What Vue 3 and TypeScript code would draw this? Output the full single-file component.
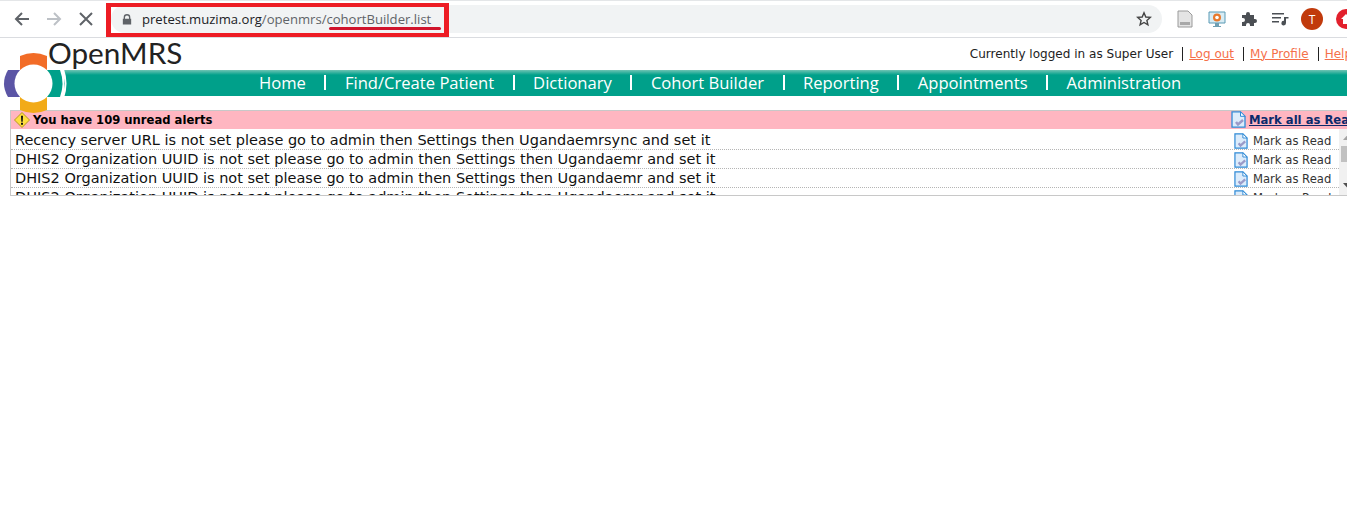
<script setup lang="ts">
const nav: string[] = ['Home', 'Find/Create Patient', 'Dictionary', 'Cohort Builder', 'Reporting', 'Appointments', 'Administration']
const alerts: string[] = [
  'Recency server URL is not set please go to admin then Settings then Ugandaemrsync and set it',
  'DHIS2 Organization UUID is not set please go to admin then Settings then Ugandaemr and set it',
  'DHIS2 Organization UUID is not set please go to admin then Settings then Ugandaemr and set it',
  'DHIS2 Organization UUID is not set please go to admin then Settings then Ugandaemr and set it',
]
</script>

<template>
  <div class="page">
    <header class="toolbar">
      <svg class="tool back" width="18" height="18" viewBox="0 0 18 18"><path d="M16 9H3.5M9 3 3 9l6 6" fill="none" stroke="#5f6368" stroke-width="2"/></svg>
      <svg class="tool fwd" width="18" height="18" viewBox="0 0 18 18"><path d="M2 9h12.500M9 3l6 6-6 6" fill="none" stroke="#bdc1c6" stroke-width="2"/></svg>
      <svg class="tool stop" width="18" height="18" viewBox="0 0 18 18"><path d="M3 3l12 12M15 3 3 15" fill="none" stroke="#5f6368" stroke-width="2"/></svg>
      <div class="omnibox">
        <svg class="lock" width="10" height="13" viewBox="0 0 12 14"><path d="M2 6V4.500a4 4 0 0 1 8 0V6h1v7H1V6zm1.600 0h4.800V4.500a2.400 2.400 0 0 0-4.800 0z" fill="#5f6368"/></svg>
        <span class="url"><b>pretest.muzima.org</b>/openmrs/cohortBuilder.list</span>
        <svg class="star" width="16" height="16" viewBox="0 0 16 16"><path d="M8 1.800 9.800 6l4.500.4-3.400 3 1 4.400L8 11.500l-3.900 2.300 1-4.400-3.400-3L6.200 6z" fill="none" stroke="#444" stroke-width="1.400"/></svg>
      </div>
      <div class="exts">
        <svg width="16" height="18" viewBox="0 0 16 18"><path d="M1 1h10l4 4v12H1z" fill="#e4e4e4" stroke="#9a9a9a"/><path d="M3 12h10v3H3z" fill="#a8a8a8"/></svg>
        <svg width="18" height="18" viewBox="0 0 18 18"><path d="M1 2h16v11H1z" fill="#d8ecf4" stroke="#5b9ab5"/><circle cx="9" cy="7.500" r="4" fill="#e8792c"/><circle cx="9" cy="7.500" r="1.800" fill="#fff"/><path d="M7 13h4v3h2v1H5v-1h2z" fill="#6f9fb3"/></svg>
        <svg width="16" height="16" viewBox="0 0 16 16"><path d="M1 4h4V3a2 2 0 0 1 4 0v1h4v4h1a2 2 0 0 1 0 4h-1v3H9v-1a2 2 0 0 0-4 0v1H1v-4h1a2 2 0 0 0 0-4H1z" fill="#4b4f54"/></svg>
        <svg width="17" height="14" viewBox="0 0 17 14"><path d="M0 1h12v1.500H0zM0 5h9v1.500H0zM0 9h7v1.500H0z" fill="#4b4f54"/><path d="M12 5h4.500v1.500H14V11a2.300 2.300 0 1 1-2-2.200z" fill="#4b4f54"/></svg>
        <span class="avatar">T</span>
        <span class="ext-red"><svg width="10" height="10" viewBox="0 0 10 10"><path d="M5 0 10 5H8v5H2V5H0z" fill="#fff"/></svg></span>
      </div>
      <div class="annotation"></div>
      <div class="underline"></div>
    </header>

    <div class="top">
      <div class="brand">OpenMRS</div>
      <div class="user">
        <span class="who">Currently logged in as Super User</span>
        <a>Log out</a>
        <a>My Profile</a>
        <a>Help</a>
      </div>
    </div>

    <nav class="nav">
      <span v-for="item in nav" :key="item" class="nav-item">{{ item }}</span>
    </nav>

    <svg class="logo" width="68" height="66" viewBox="0 0 68 66">
      <path d="M20 6q13.500-6 27 0v16H20z" fill="#f26c27"/>
      <path d="M20 44h27v16q-13.500 6-27 0z" fill="#f2ab18"/>
      <path d="M20 20H8q-8 13.500 0 27h12z" fill="#5b55a5"/>
      <path d="M47 20h13q5 13.500 0 27H47z" fill="#00a08a"/>
      <path d="M62 19q5 14.500 0 29h2q5-14.500 0-29z" fill="#fff"/>
      <circle cx="33.500" cy="33.500" r="19" fill="#fff"/>
    </svg>

    <section class="alerts">
      <div class="alert-head">
        <svg class="warn" width="16" height="16" viewBox="0 0 16 16"><path d="M8 .5 15.500 8 8 15.500.5 8z" fill="#ffdf3f" stroke="#b49a1e"/><path d="M7 3.800h2l-.3 6H7.300zM7 10.800h2v2H7z" fill="#111"/></svg>
        <span class="head-text">You have 109 unread alerts</span>
        <a class="mark-all">
          <svg class="doc" width="15" height="17" viewBox="0 0 15 17"><path d="M1 .8h8.500l4.500 4.500v10.900H1z" fill="#dcecfb" stroke="#2f8ad6" stroke-width="1.300"/><path d="M9.500 .8v4.500H14z" fill="#fff" stroke="#2f8ad6"/><path d="M5 11l2 2.500L12 9" fill="none" stroke="#9a9ac8" stroke-width="2.500"/></svg>
          <span class="all-text">Mark all as Read</span>
        </a>
      </div>
      <div class="alert-body">
        <ul class="rows">
          <li v-for="(alert, i) in alerts" :key="i" class="row">
            <span class="msg">{{ alert }}</span>
            <span class="mark">
              <svg class="doc" width="14" height="16" viewBox="0 0 15 17"><path d="M1 .8h8.500l4.500 4.500v10.900H1z" fill="#dcecfb" stroke="#2f8ad6" stroke-width="1.300"/><path d="M9.500 .8v4.500H14z" fill="#fff" stroke="#2f8ad6"/><path d="M5 11l2 2.500L12 9" fill="none" stroke="#9a9ac8" stroke-width="2.500"/></svg>
              <span>Mark as Read</span>
            </span>
          </li>
        </ul>
        <div class="scroll">
          <svg width="9" height="5" viewBox="0 0 9 5"><path d="M4.500 0 9 5H0z" fill="#a3a3a3"/></svg>
          <div class="thumb"></div>
          <svg class="down" width="9" height="5" viewBox="0 0 9 5"><path d="M0 0h9L4.500 5z" fill="#505050"/></svg>
        </div>
      </div>
    </section>
  </div>
</template>

<style scoped>
.page {
  position: relative;
  width: 1347px;
  height: 507px;
  overflow: hidden;
  background: #fff;
  font-family: "DejaVu Sans", sans-serif;
}
.toolbar {
  position: relative;
  display: flex;
  align-items: center;
  box-sizing: border-box;
  height: 38px;
  padding-left: 13px;
  border-top: 1px solid #e4e6e8;
  border-bottom: 1px solid #dadce0;
}
.tool { flex: none; }
.fwd { margin-left: 14px; }
.stop { margin-left: 14px; }
.omnibox {
  display: flex;
  align-items: center;
  flex: none;
  box-sizing: border-box;
  width: 1051px;
  height: 28px;
  margin-left: 16px;
  padding: 0 10px 0 11px;
  border-radius: 14px;
  background: #f1f3f4;
}
.lock { flex: none; }
.url {
  flex: 1;
  margin-left: 10px;
  font: 13.1px "Open Sans", sans-serif;
  color: #5f6368;
}
.url b { font-weight: 400; color: #202124; }
.exts {
  display: flex;
  align-items: center;
  flex: none;
  gap: 15px;
  margin-left: 15px;
}
.avatar {
  display: flex;
  align-items: center;
  justify-content: center;
  width: 22px;
  height: 22px;
  margin-left: -3px;
  border-radius: 50%;
  background: #c13a0c;
  color: #fff;
  font: 12px "Open Sans", sans-serif;
}
.ext-red {
  display: flex;
  align-items: center;
  justify-content: center;
  flex: none;
  width: 20px;
  height: 20px;
  margin-left: -2px;
  border-radius: 50%;
  background: #e2202c;
}
.annotation {
  position: absolute;
  left: 106px;
  top: 2px;
  width: 343px;
  height: 34px;
  box-sizing: border-box;
  border: 4px solid #ed1c24;
  border-left-width: 5px;
  border-right-width: 5px;
  pointer-events: none;
}
.underline {
  position: absolute;
  left: 329px;
  top: 26px;
  width: 112px;
  height: 3px;
  border-radius: 2px;
  background: #d0142c;
}
.top {
  display: flex;
  justify-content: space-between;
  height: 32px;
  padding-left: 48px;
}
.brand {
  font: 29.7px/29px "Lato", sans-serif;
  color: #222;
}
.user {
  display: flex;
  align-items: center;
  flex: none;
  height: 31px;
  margin-right: -5px;
  font-size: 12.05px;
  color: #222;
  white-space: nowrap;
}
.user a {
  margin-left: 9px;
  padding-left: 6px;
  border-left: 1px solid #222;
  font-size: 12px;
  line-height: 14px;
  color: #f5704a;
  text-decoration: underline;
}
.nav {
  display: flex;
  align-items: center;
  box-sizing: border-box;
  height: 26px;
  margin-left: 64px;
  padding: 0 0 2px 176px;
  background: linear-gradient(#6fc4b4 0, #00a08a 5px);
}
.nav-item {
  padding: 0 18.5px;
  border-left: 2px solid #fff;
  font: 16.6px/15px "Open Sans", sans-serif;
  color: #fff;
  white-space: nowrap;
}
.nav-item:first-child { border-left: none; padding-left: 19px; }
.logo {
  position: absolute;
  left: 0;
  top: 50px;
}
.alerts {
  box-sizing: border-box;
  width: 1400px;
  height: 86px;
  margin: 14px 0 0 10px;
  border: 1px solid #c8c8c8;
  border-right: none;
}
.alert-head {
  display: flex;
  align-items: center;
  box-sizing: border-box;
  height: 18px;
  padding: 0 0 1px 3px;
  background: #ffb6c1;
  font-size: 11.6px;
  font-weight: 700;
  color: #000;
}
.warn { flex: none; }
.head-text { margin-left: 3px; }
.mark-all {
  position: absolute;
  left: 1231px;
  display: flex;
  align-items: center;
  color: #0b2a6b;
  white-space: nowrap;
  text-decoration: underline;
}
.all-text { margin-left: 3px; }
.alert-body {
  display: flex;
  width: 1345px;
  height: 66px;
  overflow: hidden;
}
.rows {
  flex: 1;
  margin: 0;
  padding: 2px 0 0;
  list-style: none;
}
.row {
  display: flex;
  align-items: center;
  justify-content: space-between;
  box-sizing: border-box;
  height: 19px;
  padding: 0 0 0 4px;
  border-bottom: 1px dotted #b5b5b5;
}
.msg {
  font-size: 14.5px;
  color: #111;
  white-space: nowrap;
}
.mark {
  display: flex;
  align-items: center;
  flex: none;
  gap: 5px;
  width: 105px;
  padding-top: 1px;
  font-size: 11.6px;
  color: #333;
  white-space: nowrap;
}
.doc { flex: none; }
.scroll {
  display: flex;
  flex-direction: column;
  align-items: center;
  flex: none;
  box-sizing: border-box;
  width: 17px;
  height: 66px;
  padding-top: 6px;
  background: #f1f1f1;
}
.thumb {
  width: 13px;
  height: 16px;
  margin-top: 6px;
  background: #c1c1c1;
}
.down { margin-top: 21px; }
</style>
